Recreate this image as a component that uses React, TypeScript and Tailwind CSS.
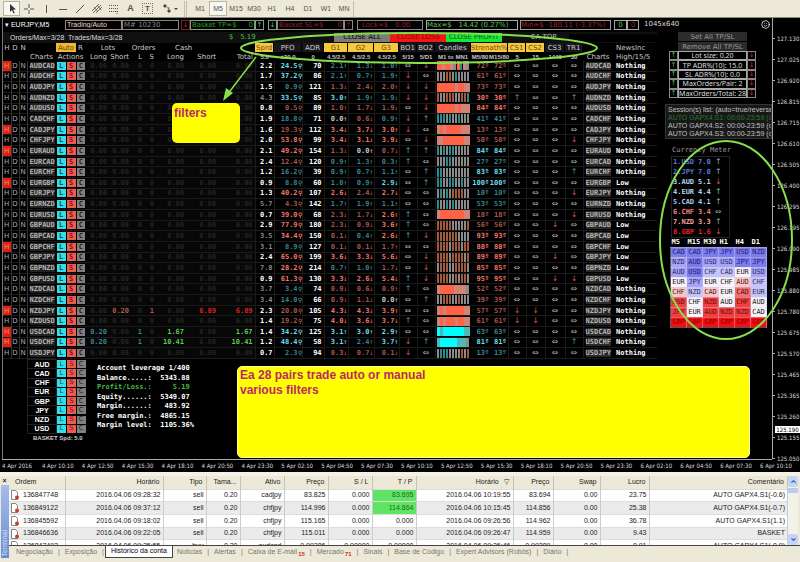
import { ReactNode } from 'react';
import { ChevronDown, ChevronUp, Smile } from 'lucide-react';
import { clsx } from 'clsx';

const timeframes = ['M1', 'M5', 'M15', 'M30', 'H1', 'H4', 'D1', 'W1', 'MN'];

// pair, spread (- = dim), PFO, ADR, G1, G2, G3, BO1+BO2+CS1+CS2+CS3+TR1, candles, strength
// tones: r red, q dim red, c cyan, t teal, w white; directions: u up, d down, x flat
const marketRows = [
  'AUDCAD 2.2 c24.5 70 t2.1u t1.3d t1.0u xdxxxx RRsRRsgRtsg q72',
  'AUDCHF 1.7 c37.2 86 t2.1u t0.7u t1.9u dxxxxx gggbbgtgggg q61',
  'AUDJPY 1.5 t0.9 121 q1.3d q2.4d q2.0u ddxxxx RRRRRRsRRss q73',
  'AUDNZD -4.3 c33.5 85 c3.0u t1.9u t1.9d dduxxu bggbbbggbbt r30',
  'AUDUSD 0.8 q0.5 89 q1.0u q1.7d q1.9d xdxxxx RRRRRRsRsss r84',
  'CADCHF 1.9 t18.8 71 w0.0u q0.6d t0.9u duxxxx tttgtggtggg t41',
  'CADJPY 1.6 q19.3 112 r3.4d r3.7d r3.0u dxxxxx sRsRRRRRsss q13',
  'CHFJPY 2.0 r53.8 99 r3.4d r3.1d r3.9d xdxxxd ssRRRRRRRss q50',
  'EURAUD 2.1 r49.2 154 q1.3d w0.0u q0.7d uuxxxx tgtgttggggg c84',
  'EURCAD 2.4 q12.4 120 t0.9u t1.3u t0.3u uxxxxx gggttgggggg t27',
  'EURCHF 1.2 t16.2 39 t0.9u t0.7u t1.1u xuxxxu ttggggggggg c83',
  'EURGBP 0.9 t8.8 60 t1.0u t0.9u c2.9d xuxxxx ttggttggtgg c100',
  'EURJPY 1.3 r40.2 107 r2.6d q2.4d r2.7d xxxxxd gtgtgbbbbgg t10',
  'EURNZD -5.7 q4.3 142 t1.7u t1.9u t1.1u xxxxxx tggtgtggggg t53',
  'EURUSD 0.7 r39.0 68 q2.3d q1.7d r2.6u uxxxxd sRRRRRRRRss q18',
  'GBPAUD 2.9 r77.9 180 q2.3d q0.9d r3.6u uxxxdx bbbbbgggggb q56',
  'GBPCAD -3.5 r34.4 150 q0.1d t0.4u r2.6d udxxxx bbbbbbbgggg r93',
  'GBPCHF -3.1 t8.9 127 q0.1d q0.1d q1.7u xxxxxx bbbbgbbbgbb r88',
  'GBPJPY 2.4 r65.0 199 r3.6d r3.3d r5.6d xdxxdx bbbbgbbbbgb r89',
  'GBPNZD -7.8 r28.2 214 t0.7u t1.0u q1.7d xdxxxx gbbbggbbbbg r85',
  'GBPUSD 0.9 r61.3 130 r3.3d r2.6d r5.4d udxxdd bbbbggbgbbg r95',
  'NZDCAD -3.7 t3.4 74 q0.9d q0.6d q0.9u uxxxxx sRRRRRssssg q52',
  'NZDCHF -3.4 t14.0 66 q0.9d q1.1d w0.0u xuxxxx ggbbbggbggg q39',
  'NZDJPY 2.3 q20.0 105 r4.3d r4.3d r3.9u xxddxx sRsRRRRRRss q57',
  'NZDUSD 1.4 q19.2 75 r4.0d r3.6d r3.7d uxddxx sRsRRRsRRss q61',
  'USDCAD 1.4 c34.2 125 c3.1u c3.0u c2.9u xxxxxx CkCCCCCCCkk t63',
  'USDCHF 1.2 c48.4 58 c3.1u t2.4u c3.7u duxxxu kCCCCCCkkkg c81',
  'USDJPY 0.7 t2.3 94 q0.3d q0.7d q0.1d dxxxxx gtttggggbgb t13',
].map((line) => {
  const [pair, spread, pfo, adr, g1, g2, g3, signals, candles, strength] = line.split(' ');
  return { pair, spread, pfo, adr, gaps: [g1, g2, g3], signals, candles, strength };
});

const hidden = ['AUDCAD', 'CADJPY', 'EURAUD', 'EURGBP', 'GBPCHF', 'NZDJPY', 'USDCAD', 'USDCHF'];
const lowNews = ['EURGBP', 'GBPAUD', 'GBPCAD', 'GBPCHF', 'GBPJPY', 'GBPNZD', 'GBPUSD'];

const emptyPosition = ['0.00', '0.00', '0', '0', '0.00', '0.00', '0.00'];
const positions: Record<string, string[]> = {
  NZDJPY: ['0.00', '0.20', '0', '1', '0.00', '6.89', '6.89'],
  USDCAD: ['0.20', '0.00', '1', '0', '1.67', '0.00', '1.67'],
  USDCHF: ['0.20', '0.00', '1', '0', '10.41', '0.00', '10.41'],
};

const tones: Record<string, string> = {
  r: 'text-[#f2766a]',
  q: 'text-[#a8564c]',
  c: 'text-[#6fdcea]',
  t: 'text-[#3a828c]',
  w: 'text-[#c8c8c8]',
};

const bars: Record<string, string> = {
  g: 'bg-[#8b8b8b] border-r border-black',
  t: 'bg-[#2a8a8c] border-r border-black',
  b: 'bg-[#a35a3c] border-r border-black',
  R: 'bg-[#ff6347]',
  s: 'bg-[#cf8476]',
  C: 'bg-[#00ffff]',
  k: 'bg-[#4fb8b8]',
};

const arrows: Record<string, string> = { u: '↑', d: '↓', x: '⇔' };

const columnWidths = [
  'w-[8px]', 'w-[8px]', 'w-[8px]', 'w-[29px]', 'w-[10px]', 'w-[10px]', 'w-[9px]',
  'w-[24px]', 'w-[22px]', 'w-[13px]', 'w-[12px]', 'w-[30px]', 'w-[32px]', 'w-[37px]',
  'w-[19px]', 'w-[28px]', 'w-[22px]', 'w-[24px]', 'w-[26px]', 'w-[25px]', 'w-[18px]', 'w-[18px]',
  'w-[36px]', 'w-[18px]', 'w-[19px]', 'w-[18px]', 'w-[19px]', 'w-[20px]', 'w-[18px]', 'w-[30px]', 'w-[44px]',
];

const filters = [
  { label: 'Sprd', on: true },
  { label: 'PFO' },
  { label: 'ADR' },
  { label: 'G1', on: true },
  { label: 'G2', on: true },
  { label: 'G3', on: true },
  { label: 'BO1' },
  { label: 'BO2' },
  { label: 'Candles' },
  { label: 'Strenath%', on: true, span: 2 },
  { label: 'CS1', on: true },
  { label: 'CS2', on: true },
  { label: 'CS3' },
  { label: 'TR1' },
];

const limits = ['5.0', '±20.0', '0', '4.5/2.5', '4.5/2.5', '4.5/2.5', '5/15', '5/D1', 'M1 to MN1', 'M5/80', 'M15/80', '5', '15', '1440', '30'];

const baskets = ['AUD', 'CAD', 'CHF', 'EUR', 'GBP', 'JPY', 'NZD', 'USD'];

const account = [
  'Account leverage 1/400',
  'Balance.....:  5343.88',
  'Profit/Loss.:     5.19',
  'Equity......:  5349.07',
  'Margin......:   483.92',
  'Free margin.:  4865.15',
  'Margin level:  1105.36%',
];

const settings = ['Lot size: 0.20', 'TP ADR%(10): 15.0', 'SL ADR%(10): 0.0', 'MaxOrders/Pair: 2', 'MaxOrders/Total: 28'];

const meter = [
  { name: 'USD', value: '7.0', dir: 'u', tone: 'text-[#5878d8]' },
  { name: 'JPY', value: '7.0', dir: 'u', tone: 'text-[#5878d8]' },
  { name: 'AUD', value: '5.1', dir: 'd', tone: 'text-[#b4d4f4]' },
  { name: 'EUR', value: '4.4', dir: 'u', tone: 'text-[#b4d4f4]' },
  { name: 'CAD', value: '4.1', dir: 'u', tone: 'text-[#a4ccec]' },
  { name: 'CHF', value: '3.4', dir: 'x', tone: 'text-[#f08078]' },
  { name: 'NZD', value: '3.3', dir: 'u', tone: 'text-[#f0a098]' },
  { name: 'GBP', value: '1.6', dir: 'd', tone: 'text-[#e02020]' },
];

const shades: Record<string, string> = {
  a: 'bg-[#7b7bf0] text-[#24245c]',
  b: 'bg-[#a4a4f8] text-[#2c2c60]',
  c: 'bg-[#c4c4fa] text-[#303060]',
  w: 'bg-[#f8f4fa] text-[#202020]',
  p: 'bg-[#f8c8c8] text-[#502020]',
  o: 'bg-[#f07070] text-[#601414]',
  e: 'bg-[#f04040] text-[#700c0c]',
  r: 'bg-[#f41010] text-[#8c0000]',
};

const ranking = [
  'aCAD aCAD aJPY aJPY aUSD aNZD',
  'bNZD aAUD bUSD bUSD aJPY aJPY',
  'bAUD aUSD cCHF cCAD wEUR bUSD',
  'wEUR bJPY wEUR wCHF pAUD cCHF',
  'pCHF cNZD pCAD wEUR oCAD cEUR',
  'eUSD wCHF eNZD wAUD eCHF wAUD',
  'eJPY wEUR eAUD eNZD eNZD wCAD',
  'rGBP rGBP rGBP rGBP rGBP rGBP',
].map((line) => line.split(' '));

const prices = [
  '127.130', '127.025', '126.920', '126.815', '126.715', '126.610', '126.505', '126.400', '126.295', '126.195', '126.090',
  '125.985', '125.880', '125.780', '125.675', '125.570', '125.465', '125.365', '125.260', '125.155', '125.050',
];

const times = [
  '4 Apr 2016', '4 Apr 10:10', '4 Apr 12:50', '4 Apr 15:30', '4 Apr 18:10', '4 Apr 20:50', '4 Apr 23:30',
  '5 Apr 02:10', '5 Apr 04:50', '5 Apr 07:30', '5 Apr 10:10', '5 Apr 12:50', '5 Apr 15:30', '5 Apr 18:10',
  '5 Apr 20:50', '5 Apr 23:30', '6 Apr 02:10', '6 Apr 04:50', '6 Apr 07:30', '6 Apr 10:10',
];

const orderColumns = [
  { label: 'Ordem', width: 'w-[56px]' },
  { label: 'Horário', width: 'w-[98px]' },
  { label: 'Tipo', width: 'w-[43px]' },
  { label: 'Tama...', width: 'w-[34px]' },
  { label: 'Ativo', width: 'w-[44px]' },
  { label: 'Preço', width: 'w-[44px]' },
  { label: 'S / L', width: 'w-[44px]' },
  { label: 'T / P', width: 'w-[44px]' },
  { label: 'Horário   ▽', width: 'w-[97px]' },
  { label: 'Preço', width: 'w-[40px]' },
  { label: 'Swap', width: 'w-[47px]' },
  { label: 'Lucro', width: 'w-[49px]' },
  { label: 'Comentário', width: '' },
];

const orders = [
  ['136847748', '2016.04.06 09:28:32', 'sell', '0.20', 'cadjpy', '83.825', '0.000', '83.695', '2016.04.06 10:19:55', '83.694', '0.00', '23.75', 'AUTO GAPX4.S1(-0.6)'],
  ['136849122', '2016.04.06 09:37:12', 'sell', '0.20', 'chfjpy', '114.996', '0.000', '114.864', '2016.04.06 10:15:45', '114.856', '0.00', '25.38', 'AUTO GAPX4.S1(-0.7)'],
  ['136845592', '2016.04.06 09:18:02', 'sell', '0.20', 'chfjpy', '115.165', '0.000', '0.000', '2016.04.06 09:26:56', '114.962', '0.00', '36.78', 'AUTO GAPX4.S1(1.1)'],
  ['136846636', '2016.04.06 09:22:05', 'sell', '0.20', 'chfjpy', '115.011', '0.000', '0.000', '2016.04.06 09:26:47', '114.959', '0.00', '9.43', 'BASKET'],
  ['136847493', '2016.04.06 09:25:55', 'buy', '0.20', 'audcad', '0.99286', '0.00000', '0.00000', '2016.04.06 09:26:46', '0.99289', '0.00', '0.91', 'AUTO GAPX4.S1(-0.9)'],
];

const tabs = [
  { label: 'Negociação' },
  { label: 'Exposição' },
  { label: 'Histórico da conta', active: true },
  { label: 'Notícias' },
  { label: 'Alertas' },
  { label: 'Caixa de E-mail', count: 15 },
  { label: 'Mercado', count: 71 },
  { label: 'Sinais' },
  { label: 'Base de Código' },
  { label: 'Expert Advisors (Robôs)' },
  { label: 'Diário' },
];

const ToolIcon = ({ label, active, children }: { label: string; active?: boolean; children: ReactNode }) => (
  <button
    aria-label={label}
    className={clsx('flex h-[15px] w-[17px] items-center justify-center', active && 'border border-[#b8b4a4] bg-[#f8f7f2]')}
  >
    <svg viewBox="0 0 12 12" className="h-[12px] w-[12px]" fill="none" stroke="#55534c" strokeWidth="1">
      {children}
    </svg>
  </button>
);

const Toolbar = () => (
  <header className="flex h-[18px] items-center border-b border-[#8c897c] bg-[#ece9d8] pl-[3px] text-[#55534c]">
    <ToolIcon label="Cursor" active>
      <path d="M4 1v8l2-2 1.500 3.500 1.200-.6L7.200 6.500H10z" fill="#333" stroke="none" />
    </ToolIcon>
    <ToolIcon label="Crosshair"><path d="M6 1v4M6 7v4M1 6h4M7 6h4" /></ToolIcon>
    <ToolIcon label="Vertical line"><path d="M6.500 2v8" /></ToolIcon>
    <ToolIcon label="Horizontal line"><path d="M2 6.500h8" /></ToolIcon>
    <ToolIcon label="Trendline"><path d="M2 10L10 2" /></ToolIcon>
    <ToolIcon label="Channel"><path d="M1 8L8 1M2 10L10 2M5 10L11 4M3 4l4 5M6 2l4 5" strokeWidth=".8" /></ToolIcon>
    <ToolIcon label="Fibonacci"><path d="M1 2.500h10M1 5.500h10M1 8.500h7M9 8v3M9 8.500h2" strokeDasharray="1 1" /></ToolIcon>
    <button className="w-[17px] text-[9px] font-bold">A</button>
    <button aria-label="Text label" className="flex w-[17px] justify-center">
      <span className="border border-dotted border-[#77756c] px-[2px] text-[8px] leading-[9px] font-bold">T</span>
    </button>
    <button aria-label="Arrows" className="flex w-[28px] items-center justify-center">
      <svg viewBox="0 0 16 12" className="h-[12px] w-[16px]" fill="#44423c">
        <path d="M3 1l2 2-2 2-2-2zM7 6l2 2-2 2-2-2zM5 4l3 1-2 1zM12 5h4l-2 2z" />
      </svg>
    </button>
    <span className="mr-[4px] h-[16px] w-[3px] border-x border-[#c4c0ae]" />
    {timeframes.map((frame) => (
      <button
        key={frame}
        className={clsx('h-[15px] w-[18px] text-[7px] leading-[13px]', frame === 'M5' && 'border border-[#b8b4a4] bg-[#f8f7f2]')}
      >
        {frame}
      </button>
    ))}
    <span className="h-[16px] border-r border-[#c4c0ae]" />
  </header>
);

const InfoBar = () => (
  <div className="flex h-[11px] items-center overflow-hidden font-['DejaVu_Sans'] text-[7px] leading-[9px] whitespace-pre text-[#58c858]">
    <span className="w-[62px] pl-[2px] font-['Liberation_Sans'] text-white">▾ EURJPY,M5</span>
    <input aria-label="Mode" defaultValue="Trading/Auto" className="h-[10px] w-[57px] border border-[#a08070] pl-px font-['Liberation_Sans'] text-[#e0d8d0]" />
    <input aria-label="Magic number" defaultValue="M# 10230" className="h-[10px] w-[57px] border border-[#888] pl-px text-[#888]" />
    <button className="ml-[2px] h-[10px] w-[9px] border border-[#722] text-[#c22]">↓</button>
    <span className="flex h-[10px] w-[65px] justify-between border border-[#8a9a8a] px-px text-[#2ca02c]"><span>Basket TP=$</span><span>0</span></span>
    <button className="h-[10px] w-[9px] border border-[#8a9a8a]">↑</button>
    <button className="ml-[4px] h-[10px] w-[9px] border border-[#8a9a8a]">↓</button>
    <span className="flex h-[10px] w-[67px] justify-between border border-[#888] px-px text-[#962020]"><span>Basket SL=$</span><span>0</span></span>
    <button className="h-[10px] w-[9px] border border-[#888] text-[#962020]">↑</button>
    <span className="ml-[4px] h-[10px] w-[66px] border border-[#888] pl-[4px] text-[#962020]">Lock=$   0.00</span>
    <span className="ml-[3px] h-[10px] w-[92px] border border-[#aaa]">Max=$   14.42 (0.27%)</span>
    <span className="ml-[2px] h-[10px] w-[91px] border border-[#999] text-[#a82424]">Min=$ -180.11 (-3.37%)</span>
    <span className="ml-[3px] h-[10px] w-[13px] border border-[#aaa] text-center">0</span>
    <span className="h-[10px] w-[12px] border border-[#aaa] text-center text-[#962020]">0</span>
    <span className="ml-[5px] text-[#ddd]">1045x640</span>
    <Smile className="mr-[2px] ml-auto size-[9px] text-white" />
  </div>
);

const CommandStrip = () => (
  <div className="flex h-[11px] items-center bg-[#101010] text-[7px] leading-[9px] whitespace-pre">
    <span className="w-[226px] pl-[7px] text-[#ddd]">Orders/Max=3/28  Trades/Max=3/28</span>
    <span className="w-[105px] font-['DejaVu_Sans'] text-[#48c048]">$   5.19</span>
    <button className="h-[9px] w-[56px] bg-[#7c7c78] font-['DejaVu_Sans'] text-black">CLOSE ALL</button>
    <button className="h-[9px] w-[56px] bg-[#f01818] font-['DejaVu_Sans'] text-[#900]">CLOSE LOSS</button>
    <button className="h-[9px] w-[56px] bg-[#18e838] font-['DejaVu_Sans'] text-[#0c5c14]">CLOSE PROFIT</button>
    <span className="w-[67px] pl-[29px] font-['DejaVu_Sans'] text-[#bbb]">EA TOP</span>
    <span className="h-[8px] flex-1 bg-black" />
  </div>
);

const TradeButtons = () => (
  <>
    <td className="border-x border-black p-0"><button className="block h-[8px] w-full bg-[#30e0e8] text-[#0c5060]">L</button></td>
    <td className="border-x border-black p-0"><button className="block h-[8px] w-full bg-[#f05a50] text-[#801010]">S</button></td>
    <td className="p-0"><button className="block h-[8px] w-full bg-[#808080] text-[#222]">C</button></td>
  </>
);

const positionTone = (value: string, index: number) => {
  if (Number(value) === 0) return 'text-[#242424]';
  if (index === 0 || index === 2) return 'text-[#3c8090]';
  if (index === 1 || index === 3) return 'text-[#b05a48]';
  return value === '6.89' ? 'text-[#d82020]' : 'text-[#58c858]';
};

const Signal = ({ dir }: { dir: string }) => (
  <td
    className={clsx(
      "border-r border-[#1a1a1a] p-0 text-center font-['DejaVu_Sans'] text-[8px] font-normal",
      dir === 'u' && 'text-[#5090a0]',
      dir === 'd' && 'text-[#c05a48]',
      dir === 'x' && 'text-[#a8a8a8]'
    )}
  >
    {arrows[dir]}
  </td>
);

const Dashboard = () => (
  <table className="h-[316px] w-[654px] table-fixed border-collapse font-['DejaVu_Sans_Mono'] text-[7px] leading-[8px] font-bold whitespace-nowrap">
    <colgroup>
      {columnWidths.map((width, i) => (
        <col key={i} className={width} />
      ))}
    </colgroup>
    <thead className="font-['DejaVu_Sans'] font-normal text-[#c8c8c8]">
      <tr className="h-[9px]">
        {['H', 'D', 'N'].map((label) => (
          <th key={label} className="p-0 font-normal">{label}</th>
        ))}
        <th className="p-0" />
        <th colSpan={2} className="bg-[#f4b830] p-0 font-normal text-[#5c3c10]">Auto</th>
        <th className="p-0 font-normal">R</th>
        <th colSpan={2} className="p-0 font-normal">Lots</th>
        <th colSpan={2} className="p-0 font-normal">Orders</th>
        <th colSpan={3} className="p-0 pl-[19px] text-left font-normal">Cash</th>
        {filters.map((filter) => (
          <th key={filter.label} colSpan={filter.span} className="p-0 font-normal">
            <button
              className={clsx(
                'mr-px flex h-[9px] w-[calc(100%-1px)] items-center justify-center',
                filter.on ? 'bg-[#f8c83c] text-[#6c4c10]' : 'bg-[#16161c] text-[#d0d0d0]'
              )}
            >
              {filter.label}
            </button>
          </th>
        ))}
        <th className="p-0" />
        <th className="p-0 pl-[3px] text-left font-normal">NewsInc</th>
      </tr>
      <tr className="h-[9px]">
        <th colSpan={3} className="p-0" />
        <th className="p-0 font-normal">Charts</th>
        <th colSpan={3} className="p-0 font-normal">Actions</th>
        {['Long', 'Short', 'L', 'S', 'Long', 'Short', 'Total'].map((label, i) => (
          <th key={i} className="p-0 pr-[2px] text-right font-normal">{label}</th>
        ))}
        {limits.map((limit, i) => (
          <th key={i} className="p-0 text-center font-['Liberation_Sans'] text-[6px]">{limit}</th>
        ))}
        <th className="p-0 font-normal">Charts</th>
        <th className="p-0 pl-[3px] text-left font-normal">High/15/5</th>
      </tr>
    </thead>
    <tbody>
      {marketRows.map((row) => (
        <tr key={row.pair} className="border-b border-[#1a1a1a]">
          <td className={clsx("p-0 text-center font-['DejaVu_Sans'] font-normal", hidden.includes(row.pair) ? 'bg-[#e01c14] text-[#f0a050]' : 'text-[#aaa]')}>H</td>
          <td className="border-x border-[#333] p-0 text-center font-['DejaVu_Sans'] font-normal text-[#aaa]">D</td>
          <td className="border-r border-[#333] p-0 text-center font-['DejaVu_Sans'] font-normal text-[#aaa]">N</td>
          <td className="p-0"><button className="ml-[2px] block bg-[#222] text-[#b4b4b4]">{row.pair}</button></td>
          <TradeButtons />
          {(positions[row.pair] || emptyPosition).map((value, i) => (
            <td key={i} className={clsx('bg-[#070707] p-0 pr-[2px] text-right', positionTone(value, i))}>{value}</td>
          ))}
          <td className={clsx('border-l border-[#1a1a1a] p-0 pr-px text-right', row.spread[0] === '-' ? 'text-[#888]' : 'text-white')}>
            {row.spread.replace('-', '')}
          </td>
          <td className={clsx('border-l border-[#1a1a1a] p-0 text-right', tones[row.pfo[0]])}>
            {row.pfo.slice(1)}
            <span className="text-[6px] leading-[6px]">⚲</span>
          </td>
          <td className="border-x border-[#1a1a1a] p-0 pr-[2px] text-right text-white">{row.adr}</td>
          {row.gaps.map((gap, i) => (
            <td key={i} className={clsx('border-r border-[#1a1a1a] p-0 text-right', tones[gap[0]])}>
              {gap.slice(1, 4)}
              <span className="font-normal">{arrows[gap[4]]}</span>
            </td>
          ))}
          <Signal dir={row.signals[0]} />
          <Signal dir={row.signals[1]} />
          <td className="p-0 px-px">
            <div className="flex h-[9px]">
              {row.candles.split('').map((bar, i) => (
                <span key={i} className={clsx('flex-1', bars[bar])} />
              ))}
            </div>
          </td>
          <td className={clsx('p-0 text-right', tones[row.strength[0]])}>{row.strength.slice(1)}º</td>
          <td className={clsx('border-r border-[#1a1a1a] p-0 pr-px text-right', tones[row.strength[0]])}>{row.strength.slice(1)}º</td>
          {row.signals.slice(2).split('').map((dir, i) => (
            <Signal key={i} dir={dir} />
          ))}
          <td className="p-0"><button className="ml-[2px] block bg-[#2a2a2a] text-[#b4b4b4]">{row.pair}</button></td>
          <td className="p-0 pl-[3px] text-white">{lowNews.includes(row.pair) ? 'Low' : 'Nothing'}</td>
        </tr>
      ))}
    </tbody>
  </table>
);

const BasketPanel = () => (
  <div className="flex">
    <div className="w-[82px] pl-[24px]">
      <table className="h-[75px] w-[58px] table-fixed border-collapse font-['DejaVu_Sans'] text-[7px] leading-[7px]">
        <colgroup>
          <col className="w-[29px]" />
          <col className="w-[10px]" />
          <col className="w-[10px]" />
          <col className="w-[9px]" />
        </colgroup>
        <tbody>
          {baskets.map((name) => (
            <tr key={name}>
              <td className="border border-[#222] p-0 text-center font-['Liberation_Sans'] font-bold text-white">{name}</td>
              <TradeButtons />
            </tr>
          ))}
        </tbody>
      </table>
      <p className="pl-[6px] text-[6px] leading-[9px] font-bold whitespace-nowrap text-[#ccc]">BASKET Spd: 5.0</p>
    </div>
    <div className="mt-[5px] ml-[12px] flex h-[66px] flex-col justify-between font-['DejaVu_Sans_Mono'] text-[7px] leading-[9px] font-bold whitespace-pre text-white">
      {account.map((line) => (
        <p key={line} className={clsx(line.startsWith('Profit') && 'text-[#48b848]')}>{line}</p>
      ))}
    </div>
  </div>
);

const SidePanel = () => (
  <aside className="min-w-0 flex-1 overflow-hidden pl-[8px] font-['DejaVu_Sans'] text-[7px] leading-[8px] whitespace-nowrap">
    <div className="ml-[13px] flex w-[69px] flex-col gap-px text-[#999]">
      <button className="h-[9px] bg-[#2c2c2c]">Set All TP/SL</button>
      <button className="h-[9px] bg-[#2c2c2c]">Remove All TP/SL</button>
    </div>
    <div className="ml-[4px] flex h-[47px] w-[87px] flex-col">
      {settings.map((setting) => (
        <div key={setting} className="flex min-h-0 flex-1">
          <button aria-label={`Increase ${setting}`} className="w-[9px] border border-[#888] leading-[7px] text-[#40c040]">↑</button>
          <span className="flex flex-1 items-center justify-center overflow-hidden border border-[#aaa] font-['Noto_Sans'] leading-[7px] text-[#ddd]">{setting}</span>
          <button aria-label={`Decrease ${setting}`} className="w-[9px] border border-[#888] leading-[7px] text-[#d02020]">↓</button>
        </div>
      ))}
    </div>
    <div className="mt-[6px] flex h-[35px] flex-col justify-center overflow-hidden border border-[#333] bg-[#181818] pl-[2px] font-['Liberation_Sans'] text-[#c0c0c0]">
      <p>Session(s) list:  (auto=true/reverse=false)</p>
      <p className="text-[#287828]">AUTO GAPX4.S1: 00:00-23:59 (open)</p>
      <p>AUTO GAPX4.S2: 00:00-23:59 (disabled)</p>
      <p>AUTO GAPX4.S3: 00:00-23:59 (disabled)</p>
    </div>
    <h2 className="mt-[6px] ml-[7px] h-[11px] font-['DejaVu_Sans_Mono'] leading-[11px] text-[#999]">Currency Meter</h2>
    <ol className="ml-[6px] w-[59px] border border-[#222] font-['DejaVu_Sans_Mono'] font-bold">
      {meter.map((item, i) => (
        <li key={item.name} className={clsx('flex h-[10px] items-center', item.tone)}>
          <span className="w-[26px] pl-px">{i + 1}.{item.name}</span>
          <span className="w-[17px]">{item.value}</span>
          <span className={clsx("font-['DejaVu_Sans'] text-[8px] font-normal", item.dir === 'd' ? 'text-[#c05a48]' : 'text-[#88a8a8]')}>{arrows[item.dir]}</span>
        </li>
      ))}
    </ol>
    <table className="ml-[5px] w-[97px] table-fixed border-collapse font-['DejaVu_Sans_Mono']">
      <thead>
        <tr className="h-[9px] text-white">
          {['M5', 'M15', 'M30', 'H1', 'H4', 'D1'].map((frame) => (
            <th key={frame} className="p-0 pl-px text-left">{frame}</th>
          ))}
        </tr>
      </thead>
      <tbody>
        {ranking.map((row, i) => (
          <tr key={i} className="h-[10px]">
            {row.map((cell, j) => (
              <td key={j} className={clsx('border border-[#d8c8e8]/40 p-0 text-center', shades[cell[0]])}>{cell.slice(1)}</td>
            ))}
          </tr>
        ))}
      </tbody>
    </table>
  </aside>
);

const PriceAxis = () => (
  <div className="relative w-[28px] shrink-0 border-l border-[#aaa] pt-[10px] font-['DejaVu_Sans_Condensed','Liberation_Sans',sans-serif] text-[6px] text-[#ddd]">
    <div className="-mb-[12px]">
      {prices.map((price) => (
        <div key={price} className="flex h-[21px] items-center gap-[2px]">
          <span className="w-[2px] border-t border-[#aaa]" />
          {price}
        </div>
      ))}
    </div>
    <span className="absolute top-[408px] right-0 left-[2px] bg-white text-center leading-[7px] text-black">125.190</span>
  </div>
);

const Annotations = () => (
  <>
    <div className="absolute top-[85px] left-[172px] h-[40px] w-[68px] rounded-[5px] bg-[#ffff00] px-[2px] pt-[3px] text-[12px] leading-[15px] font-bold text-[#b8286c]">
      filters
    </div>
    <div className="absolute top-[348px] right-[50px] left-[237px] h-[92px] rounded-[5px] border border-[#ffffa8] bg-[#ffff00] px-[2px] pt-px text-[12px] leading-[15px] font-bold text-[#b8286c]">
      <p>Ea 28 pairs trade auto or manual</p>
      <p>various filters</p>
    </div>
    <svg viewBox="0 0 800 440" className="pointer-events-none absolute top-0 left-0 h-[440px] w-[800px]" fill="none" stroke="#86e04c" strokeWidth="2">
      <ellipse cx="419" cy="30" rx="178" ry="15" />
      <ellipse cx="726" cy="222" rx="66" ry="99" />
      <path d="M256 39L227 77" strokeWidth="1.500" />
      <path d="M223 83l3-13 7 5z" fill="#86e04c" stroke="none" />
    </svg>
  </>
);

const Chart = () => (
  <main className="relative bg-black">
    <div className="flex">
      <div className="ml-[2px] min-w-0 flex-1 border-l border-[#777] pt-px">
        <InfoBar />
        <div className="mt-[2px] flex">
          <div className="w-[654px] shrink-0 pb-[16px]">
            <CommandStrip />
            <Dashboard />
            <BasketPanel />
          </div>
          <SidePanel />
        </div>
      </div>
      <PriceAxis />
    </div>
    <div className="mr-[28px] ml-[2px] border-t border-[#aaa]" />
    <div className="grid h-[12px] grid-cols-20 pl-[2px] font-['DejaVu_Sans_Condensed','Liberation_Sans',sans-serif] text-[6px] leading-[12px] whitespace-nowrap text-[#ddd]">
      {times.map((time) => (
        <span key={time}>{time}</span>
      ))}
    </div>
    <Annotations />
  </main>
);

const OrderIcon = () => (
  <svg viewBox="0 0 10 10" className="mr-[3px] inline-block size-[10px]">
    <path d="M1.500.5h4l2 2v7h-6z" fill="#fff" stroke="#666" strokeWidth=".8" />
    <circle cx="7" cy="7.500" r="2" fill="#b8442c" />
  </svg>
);

const Terminal = () => (
  <section className="flex border-t-4 border-[#f4f2e8] bg-[#ece9d8] text-[7px] text-[#222]">
    <div className="flex w-[9px] shrink-0 flex-col items-center">
      <button aria-label="Close" className="h-[9px] leading-[9px] font-bold">×</button>
      <div className="flex w-[8px] flex-1 items-end justify-center bg-linear-to-b from-[#a8bcec] to-[#6c8cd0] pb-[2px]">
        <span className="rotate-180 leading-[8px] text-[#d4e0fc] [writing-mode:vertical-rl]">Terminal</span>
      </div>
    </div>
    <div className="min-w-0 flex-1">
      <div className="flex h-[70px] overflow-hidden border-b border-[#444]">
        <table className="h-[76px] min-w-0 flex-1 table-fixed border-collapse bg-white leading-[10px] whitespace-pre">
          <thead>
            <tr className="h-[13px] bg-[#ece9d8]">
              {orderColumns.map((column, i) => (
                <th key={i} className={clsx('border-r border-[#c8c4b4] p-0 font-normal', column.width, i === 0 ? 'pl-[6px] text-left' : 'pr-[3px] text-right')}>
                  {column.label}
                </th>
              ))}
            </tr>
          </thead>
          <tbody>
            {orders.map((order, i) => (
              <tr key={order[0]} className={clsx('border-t border-[#ddd]', i % 2 === 1 && 'bg-[#ebebeb]')}>
                {order.map((value, j) => (
                  <td
                    key={j}
                    className={clsx(
                      'border-r border-[#ccc] p-0',
                      j === 0 ? 'pl-px text-left' : 'pr-[2px] text-right',
                      j === 7 && i < 2 && 'bg-[#60e464] text-[#206820]'
                    )}
                  >
                    {j === 0 && <OrderIcon />}
                    {value}
                  </td>
                ))}
              </tr>
            ))}
          </tbody>
        </table>
        <div className="mr-[2px] flex w-[10px] shrink-0 flex-col bg-[#f2f1ea] text-[#3c5ca0]">
          <button aria-label="Scroll up" className="flex h-[11px] items-center justify-center rounded-[2px] bg-[#c4d4f8]"><ChevronUp size={7} strokeWidth={4} /></button>
          <span className="mt-px h-[5px] rounded-[1px] bg-[#b8ccf0]" />
          <button aria-label="Scroll down" className="mt-auto flex h-[11px] items-center justify-center rounded-[2px] bg-[#c4d4f8]"><ChevronDown size={7} strokeWidth={4} /></button>
        </div>
      </div>
      <nav className="flex h-[12px] items-center pl-[3px] text-[#77756c]">
        {tabs.map((tab) => (
          <button
            key={tab.label}
            className={clsx(
              'flex h-full items-center whitespace-nowrap',
              tab.active ? 'border border-t-0 border-[#444] bg-white px-[5px] text-black' : 'px-[4px]'
            )}
          >
            {tab.label}
            {tab.count && <span className="ml-px self-end text-[6px] leading-[7px] font-bold text-[#d03020]">{tab.count}</span>}
            {!tab.active && <span className="-mr-[3px] ml-[5px]">|</span>}
          </button>
        ))}
      </nav>
    </div>
  </section>
);

const App = () => (
  <div className="min-h-screen overflow-hidden bg-[#ece9d8] font-['Liberation_Sans',sans-serif] text-[7px]">
    <Toolbar />
    <Chart />
    <Terminal />
  </div>
);

export default App;
